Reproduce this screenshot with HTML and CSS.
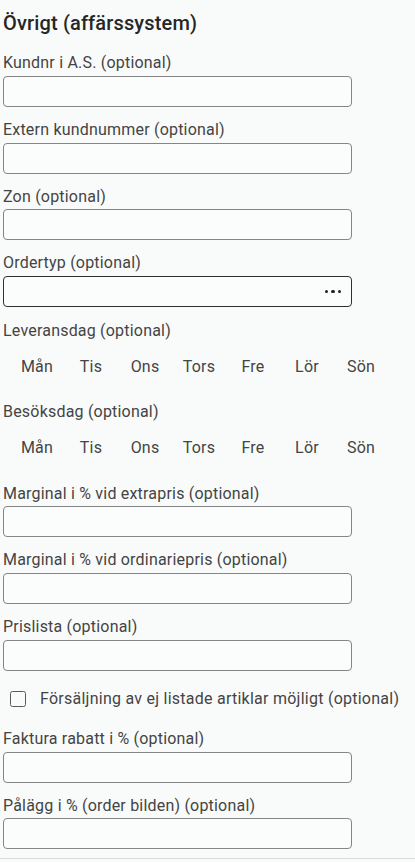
FILE: index.html
```html
<!DOCTYPE html>
<html lang="sv">
<head>
<meta charset="utf-8">
<title>Övrigt (affärssystem)</title>
<link rel="stylesheet" href="styles.css">
</head>
<body>
<main class="page">
  <h2 class="title">Övrigt (affärssystem)</h2>

  <div class="field">
    <label class="label">Kundnr i A.S. (optional)</label>
    <div class="input"></div>
  </div>
  <div class="field">
    <label class="label">Extern kundnummer (optional)</label>
    <div class="input"></div>
  </div>
  <div class="field">
    <label class="label">Zon (optional)</label>
    <div class="input"></div>
  </div>
  <div class="field">
    <label class="label">Ordertyp (optional)</label>
    <div class="input input-select"><span class="dots"><i></i><i></i><i></i></span></div>
  </div>

  <div class="days-field">
    <label class="label">Leveransdag (optional)</label>
    <div class="days">
      <span>Mån</span><span>Tis</span><span>Ons</span><span>Tors</span><span>Fre</span><span>Lör</span><span>Sön</span>
    </div>
  </div>
  <div class="days-field">
    <label class="label">Besöksdag (optional)</label>
    <div class="days">
      <span>Mån</span><span>Tis</span><span>Ons</span><span>Tors</span><span>Fre</span><span>Lör</span><span>Sön</span>
    </div>
  </div>

  <div class="field field-after-days">
    <label class="label">Marginal i % vid extrapris (optional)</label>
    <div class="input"></div>
  </div>
  <div class="field">
    <label class="label">Marginal i % vid ordinariepris (optional)</label>
    <div class="input"></div>
  </div>
  <div class="field">
    <label class="label">Prislista (optional)</label>
    <div class="input"></div>
  </div>

  <div class="check-row">
    <span class="checkbox"></span>
    <span class="check-label">Försäljning av ej listade artiklar möjligt (optional)</span>
  </div>

  <div class="field">
    <label class="label">Faktura rabatt i % (optional)</label>
    <div class="input"></div>
  </div>
  <div class="field">
    <label class="label">Pålägg i % (order bilden) (optional)</label>
    <div class="input"></div>
  </div>
</main>
<div class="divider"></div>
</body>
</html>
```

FILE: styles.css
```css
html, body {
  margin: 0;
  padding: 0;
  background: #f9fbfb;
}

body {
  font-family: Roboto, "Liberation Sans", Arial, sans-serif;
  color: #333;
  width: 415px;
  height: 862px;
  overflow: hidden;
}

.page {
  padding: 0 0 0 3px;
  display: flex;
  flex-direction: column;
}

.title {
  margin: 11px 0 0 0;
  font-size: 20px;
  font-weight: 500;
  line-height: 24px;
  letter-spacing: 0.15px;
  color: #262626;
}

.field {
  display: flex;
  flex-direction: column;
  margin-top: 14px;
}

.title + .field {
  margin-top: 19px;
}

.label {
  font-size: 16px;
  line-height: 18.75px;
  letter-spacing: 0.2px;
  color: #444;
  margin-bottom: 3px;
}

.input {
  width: 349px;
  height: 31px;
  box-sizing: border-box;
  border: 1.5px solid #858585;
  border-radius: 4px;
  background: #fbfcfc;
  display: flex;
  align-items: center;
  justify-content: flex-end;
}

.input-select {
  border-color: #2f2f2f;
}

.dots {
  display: flex;
  gap: 3px;
  margin-right: 10px;
}

.dots i {
  display: block;
  width: 3.5px;
  height: 3.5px;
  border-radius: 50%;
  background: #222;
}

.days-field {
  display: flex;
  flex-direction: column;
  margin-top: 15px;
}

.days-field + .days-field {
  margin-top: 18px;
}

.days {
  display: grid;
  grid-template-columns: repeat(7, 54px);
  margin: 5px 0 0 7px;
  height: 36px;
  align-items: center;
}

.days span {
  text-align: center;
  font-size: 16px;
  letter-spacing: 0.2px;
  color: #444;
}

.field-after-days {
  margin-top: 19px;
}

.check-row {
  display: flex;
  align-items: center;
  height: 34px;
  margin-top: 11px;
}

.checkbox {
  width: 16px;
  height: 16px;
  box-sizing: border-box;
  border: 1.5px solid #5a5a5a;
  border-radius: 2.5px;
  margin-left: 7px;
  margin-right: 14px;
}

.check-label {
  font-size: 16px;
  letter-spacing: 0.25px;
  color: #444;
}

.divider {
  position: absolute;
  left: 0;
  right: 0;
  top: 858px;
  height: 1px;
  background: #dcdcdc;
}
```
